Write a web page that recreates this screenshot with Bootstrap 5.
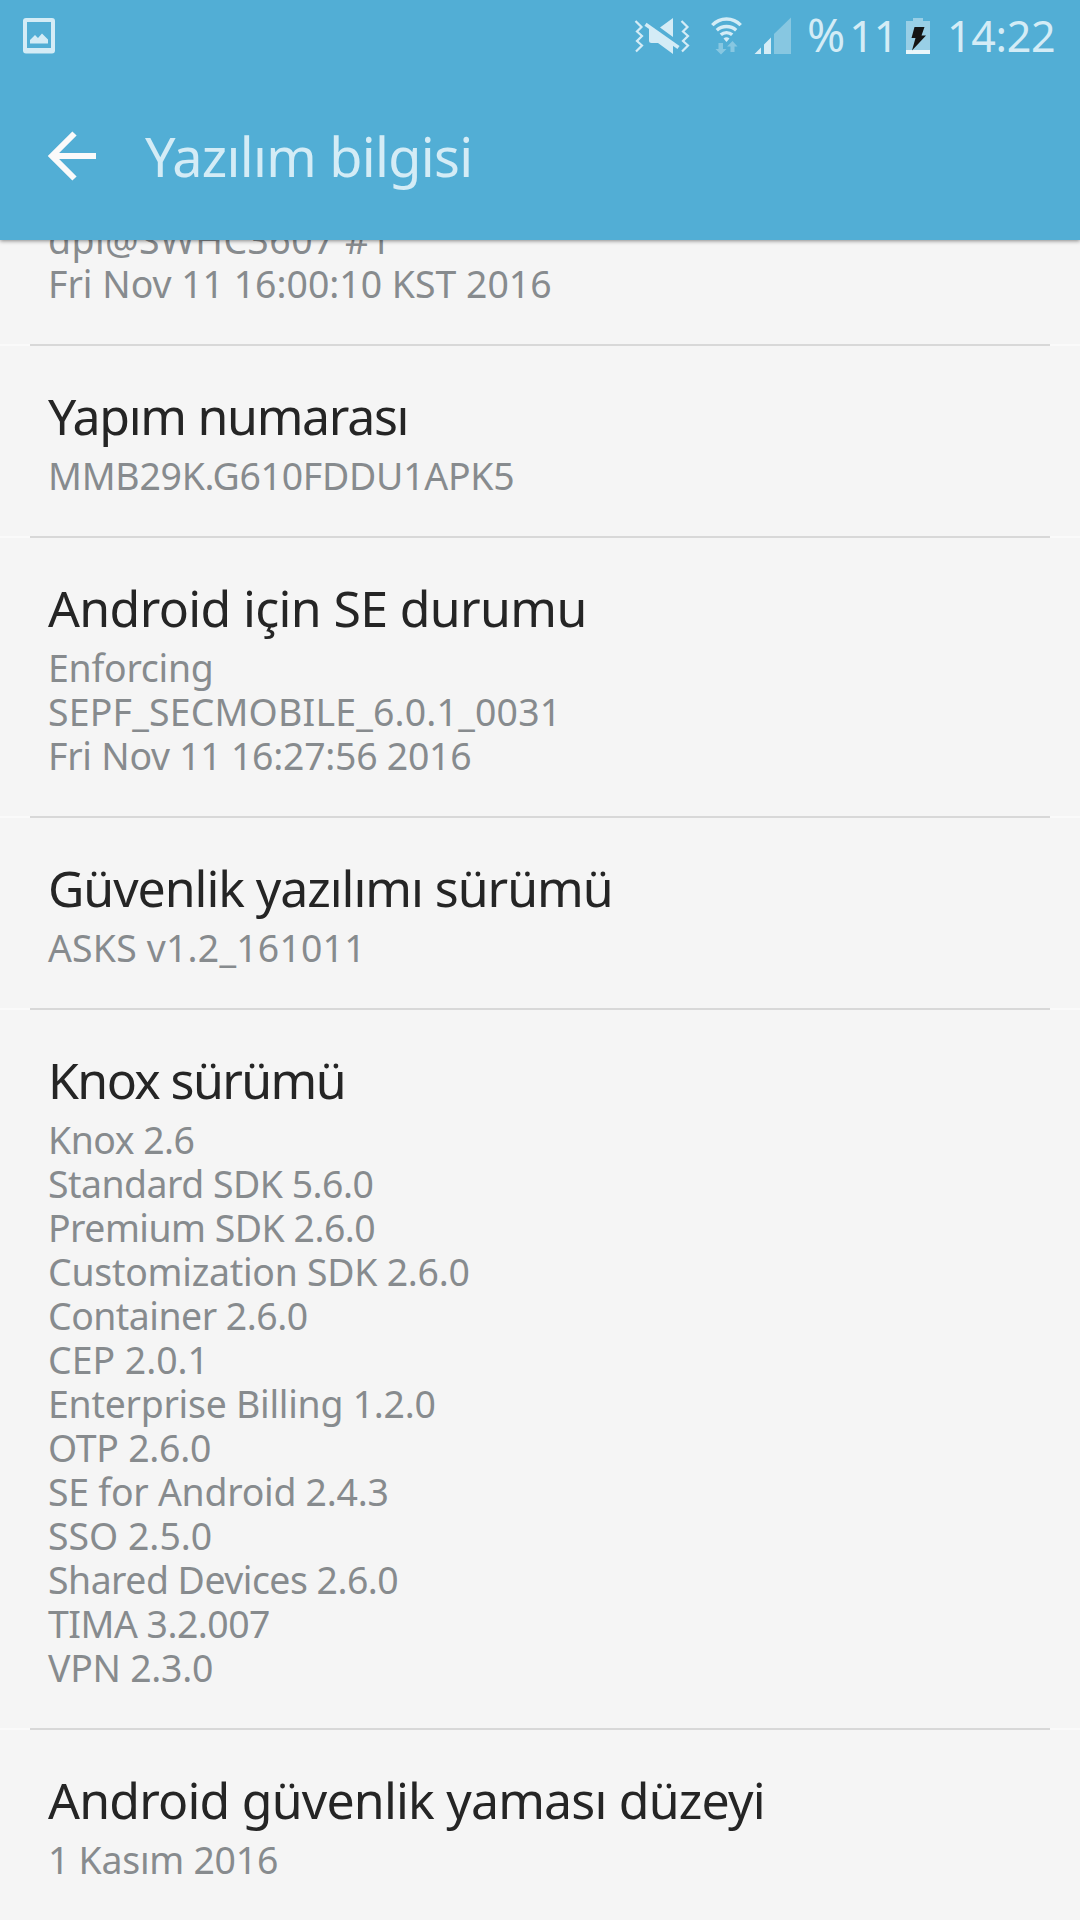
<!DOCTYPE html>
<html lang="tr">
<head>
<meta charset="utf-8">
<meta name="viewport" content="width=device-width, initial-scale=1">
<title>Yazılım bilgisi</title>
<link href="https://cdn.jsdelivr.net/npm/bootstrap@5.3.0/dist/css/bootstrap.min.css" rel="stylesheet">
<style>
  body { font-family: "Noto Sans", sans-serif; background: #f5f5f5; width: 1080px; height: 1920px; }
  .app-head { height: 240px; background: #52aed5; color: #d4ecf6; box-shadow: 0 1px 4px rgba(0,0,0,.45); z-index: 2; }
  .status-row { height: 72px; font-size: 43px; line-height: 74px; padding-left: 20px; padding-right: 24px; }
  .status-row svg { display: block; height: 72px; flex: none; }
  .pct { margin-left: 14px; width: 97px; }
  .pct-sign { font-size: 46px; letter-spacing: 4px; line-height: 1; }
  .clock-text { letter-spacing: -.3px; margin-left: 15px; width: 109px; }
  .title-row { height: 168px; padding-left: 46px; }
  .title-row h1 { font-size: 54px; line-height: 64px; letter-spacing: -.7px; margin-left: 47px; }
  .title-row svg { display: block; }
  .info-list { margin-top: -22px; }
  .info-item { padding: 44px 48px 38px; background: linear-gradient(90deg,#fafafa 30px,#d8d8d8 30px,#d8d8d8 1050px,#fafafa 1050px) no-repeat top / 100% 2px; }
  .info-item.first-item { background: none; padding-top: 0; }
  .info-item h2 { font-size: 50px; line-height: 56px; color: #252525; margin: 0 0 10px; }
  .info-item p { font-size: 37.4px; line-height: 44px; color: #878b8e; letter-spacing: -.25px; }
  .ls-none { letter-spacing: 0; }
  .ls-tight { letter-spacing: -.5px; }
  .ls-soft { letter-spacing: .2px; }
  .ls-wide { letter-spacing: .45px; }
  .ls-t1 { letter-spacing: -1.3px; }
  .ls-t2 { letter-spacing: -.65px; }
  .ls-t3 { letter-spacing: -1.05px; }
  .ls-t4 { letter-spacing: -.8px; }
  .ls-t5 { letter-spacing: -1.6px; }
</style>
</head>
<body class="overflow-hidden m-0">
<header class="app-head position-relative">
  <div class="status-row d-flex align-items-center">
    <svg width="38" viewBox="20 0 38 72">
      <path fill="#d4ecf6" fill-rule="evenodd" d="M26 18h26a3 3 0 0 1 3 3v29.500a3 3 0 0 1-3 3H26a3 3 0 0 1-3-3V21a3 3 0 0 1 3-3zM27 22v26h24V22z"/>
      <path fill="#d4ecf6" d="M30 43.500v-3.500l5-5 3 3 4-4.500 6 6v4z"/>
    </svg>
    <svg class="ms-auto" width="58" viewBox="633 0 58 72">
      <path fill="none" stroke="#d4ecf6" stroke-width="2.200" d="M635.500 21l6 6-4.500 4.500 5 4.500-5 5 5 4.500-6 6M681.500 21l6 6-4.500 4.500 5 4.500-5 5 5 4.500-6 6"/>
      <path fill="#d4ecf6" d="M660 27.500l13-9.500v19zM649 27.500L673 44v10l-15-11h-6.500q-2.500 0-2.500-2.500z"/>
      <path stroke="#d4ecf6" stroke-width="3.600" d="M645.500 24.300l33 23.200"/>
    </svg>
    <svg width="60" viewBox="691 0 60 72">
      <path fill="none" stroke="#d4ecf6" stroke-width="3.400" d="M712.300 25.200a19.500 19.500 0 0 1 28.400 0M716.800 30.200a14.500 14.500 0 0 1 19.400 0M720.800 34.800a8.500 8.500 0 0 1 11.400 0"/>
      <path fill="#d4ecf6" d="M723.500 38.500q3-2.500 6 0l-3 3.500z"/>
      <path fill="#87c7e1" d="M718.500 43h4.500v6h3.500l-5.500 5.500-5.500-5.500h3zM730.500 52v-5.500h-3.500l5.500-5.500 5 5.500h-3v5.500z"/>
    </svg>
    <svg width="42" viewBox="751 0 42 72">
      <path fill="#d4ecf6" d="M754.500 54l6.500-6.500V54zM764 44.500l7-7V54h-7z"/>
      <path fill="#87c7e1" d="M774 34l17-16.500V54h-17z"/>
    </svg>
    <div class="pct text-nowrap"><span class="pct-sign">%</span>11</div>
    <svg width="28" viewBox="904 0 28 72">
      <path fill="#99cfe6" d="M906 21h7v-3h10v3h7v33h-24z"/>
      <path fill="#eaf6fa" d="M906 50h24v4h-24z"/>
      <path fill="#151515" d="M914.500 27h10l-3 8.500h4.500L912 50.500l3.500-12.500h-4z"/>
    </svg>
    <div class="clock-text text-nowrap">14:22</div>
  </div>
  <div class="title-row d-flex align-items-center">
    <svg width="52" height="52" viewBox="46 130 52 52"><path fill="none" stroke="#fafafa" stroke-width="6" d="M96 156H51M74.500 133.500L52 156l22.500 22.500"/></svg>
    <h1 class="mb-0 fw-normal">Yazılım bilgisi</h1>
  </div>
</header>
<main class="info-list">
  <section class="info-item first-item">
    <p class="mb-0"><span class="ls-wide">dpi@SWHC3607 #1</span><br><span class="ls-none">Fri Nov 11 16:00:10 KST 2016</span></p>
  </section>
  <section class="info-item">
    <h2 class="fw-normal ls-t1">Yapım numarası</h2>
    <p class="mb-0">MMB29K.G610FDDU1APK5</p>
  </section>
  <section class="info-item">
    <h2 class="fw-normal ls-t2">Android için SE durumu</h2>
    <p class="mb-0">Enforcing<br><span class="ls-soft">SEPF_SECMOBILE_6.0.1_0031</span><br>Fri Nov 11 16:27:56 2016</p>
  </section>
  <section class="info-item">
    <h2 class="fw-normal ls-t3">Güvenlik yazılımı sürümü</h2>
    <p class="mb-0"><span class="ls-soft">ASKS v1.2_161011</span></p>
  </section>
  <section class="info-item">
    <h2 class="fw-normal ls-t5">Knox sürümü</h2>
    <p class="mb-0"><span class="ls-tight">Knox 2.6<br>Standard SDK 5.6.0<br>Premium SDK 2.6.0</span><br>Customization SDK 2.6.0<br><span class="ls-tight">Container 2.6.0</span><br><span class="ls-none">CEP 2.0.1</span><br>Enterprise Billing 1.2.0<br>OTP 2.6.0<br>SE for Android 2.4.3<br><span class="ls-none">SSO 2.5.0</span><br><span class="ls-tight">Shared Devices 2.6.0<br>TIMA 3.2.007</span><br>VPN 2.3.0</p>
  </section>
  <section class="info-item">
    <h2 class="fw-normal ls-t4">Android güvenlik yaması düzeyi</h2>
    <p class="mb-0">1 Kasım 2016</p>
  </section>
</main>
<script src="https://cdn.jsdelivr.net/npm/bootstrap@5.3.0/dist/js/bootstrap.bundle.min.js"></script>
</body>
</html>
